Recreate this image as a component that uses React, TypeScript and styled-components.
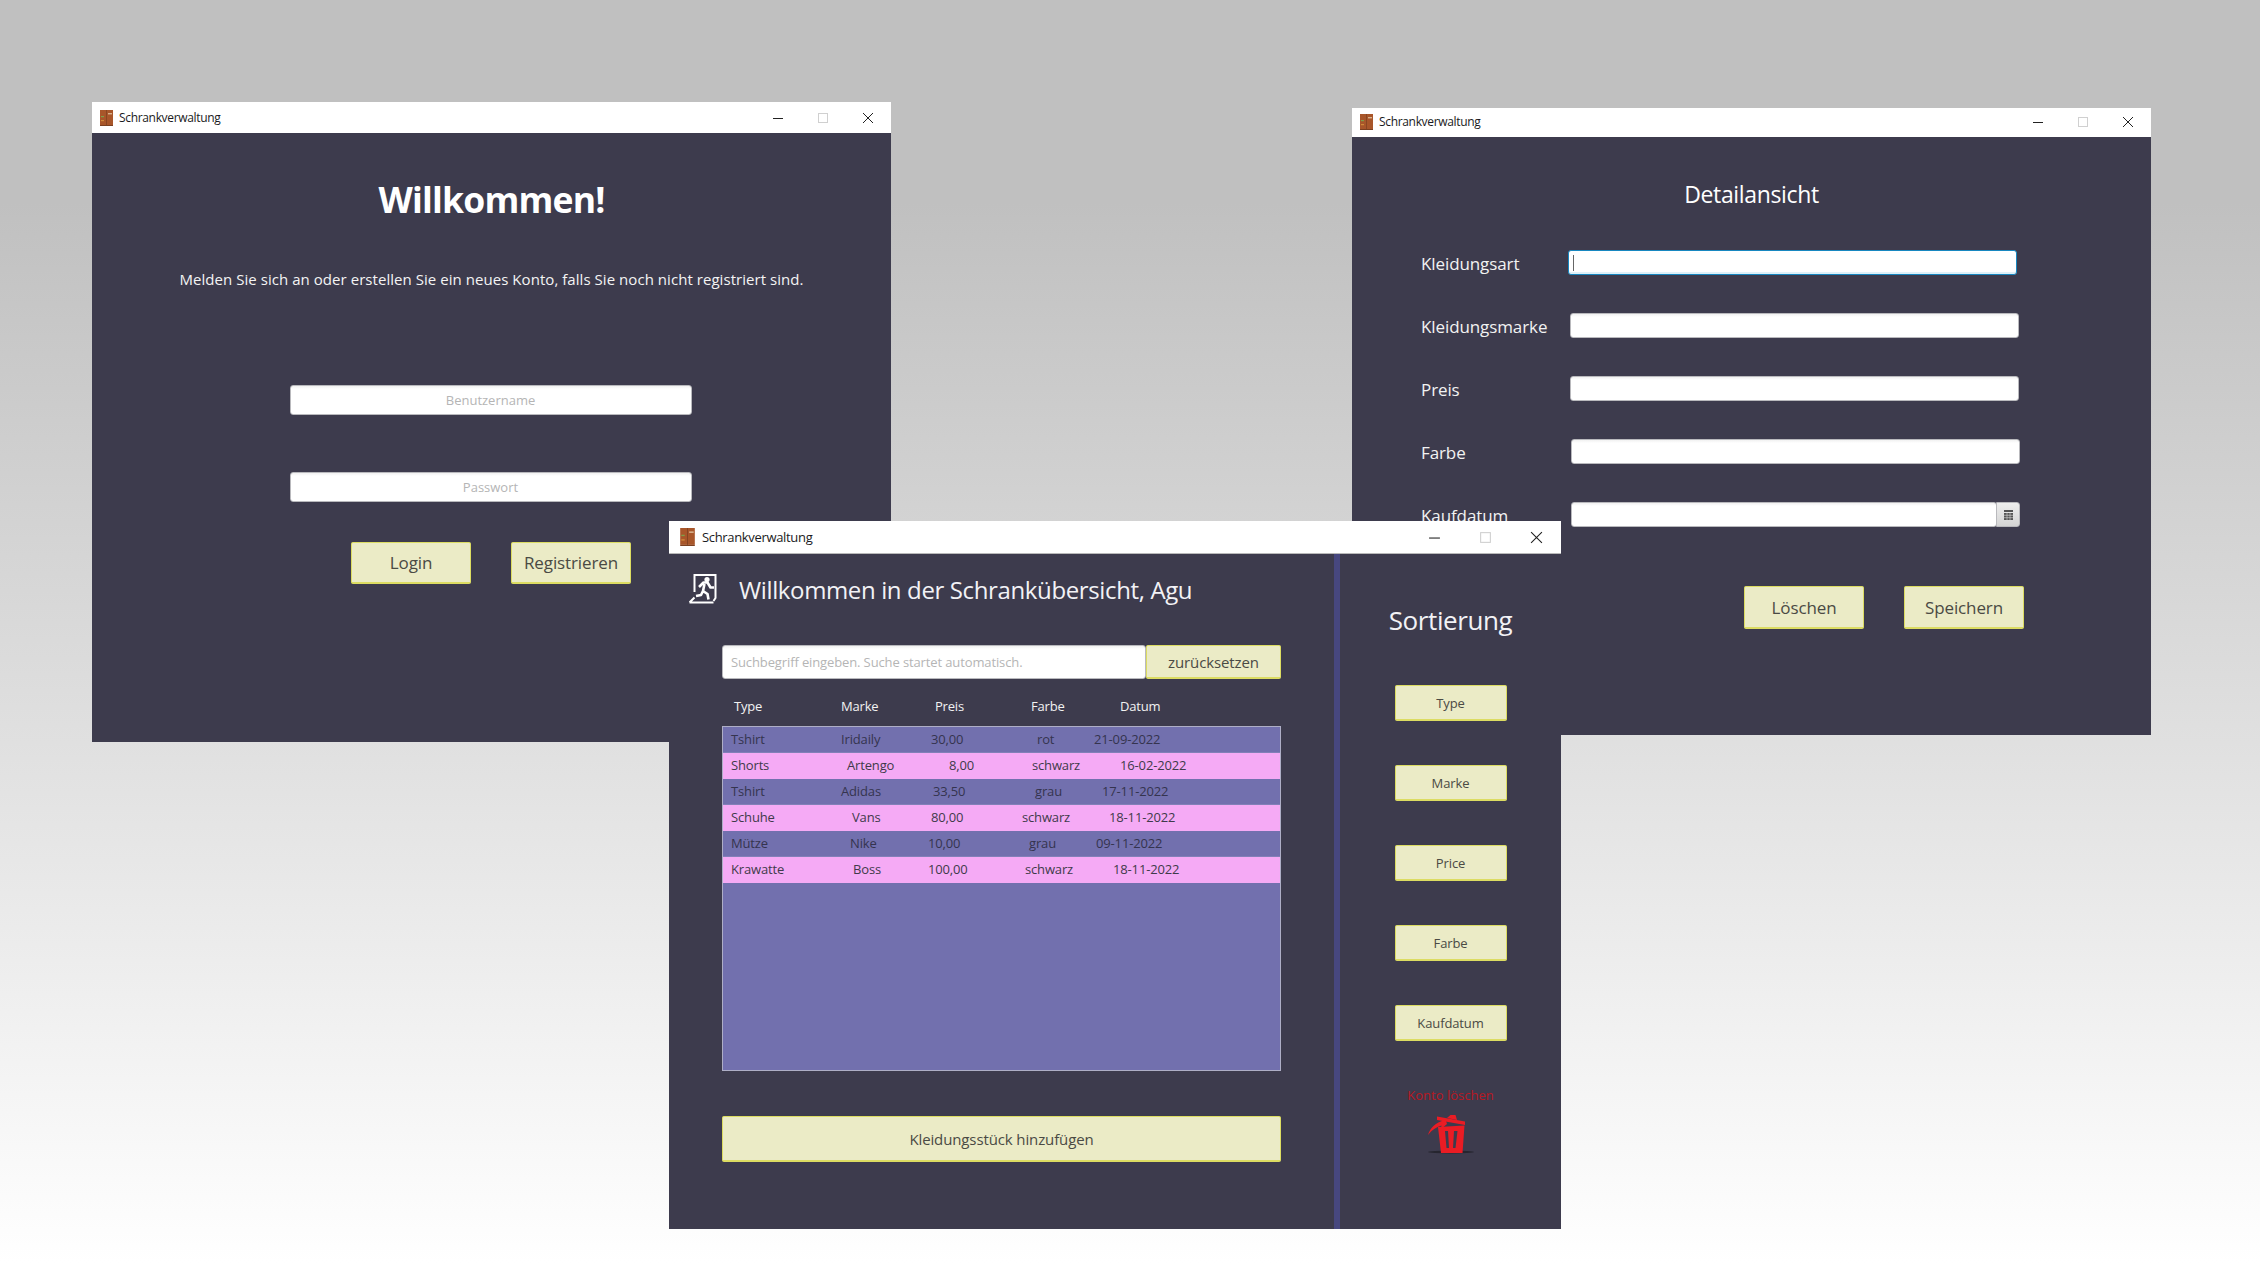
import React from 'react'
import styled, { createGlobalStyle } from 'styled-components'

const GlobalStyle = createGlobalStyle`
  html, body {
    margin: 0;
    padding: 0;
  }
  body {
    font-family: "Open Sans", "Noto Sans", sans-serif;
  }
  * {
    box-sizing: border-box;
  }
`

const Desktop = styled.div`
  position: relative;
  width: 2260px;
  height: 1264px;
  overflow: hidden;
  background: linear-gradient(#c0c0c0 16%, #ffffff 100%);
`

const Window = styled.section<{ $x: number; $y: number; $w: number; $h: number }>`
  position: absolute;
  left: ${p => p.$x}px;
  top: ${p => p.$y}px;
  width: ${p => p.$w}px;
  height: ${p => p.$h}px;
  display: flex;
  flex-direction: column;
  background: #3d3b4d;
`

const TitleBar = styled.header<{ $h: number; $big?: boolean; $lift?: number }>`
  flex: none;
  height: ${p => p.$h}px;
  display: flex;
  align-items: center;
  background: #ffffff;
  padding-left: ${p => (p.$big ? 11 : 8)}px;
  padding-bottom: ${p => p.$lift ?? 0}px;
  font-size: ${p => (p.$big ? 13 : 12)}px;
  letter-spacing: -0.33px;
  color: #1a1a22;
  border-bottom: ${p => (p.$big ? '1px solid #b9b9b9' : 'none')};
`

const TitleText = styled.span<{ $big?: boolean }>`
  margin-left: ${p => (p.$big ? 7 : 6)}px;
`

const Controls = styled.div<{ $big?: boolean }>`
  margin-left: auto;
  display: flex;
  align-items: center;
  gap: ${p => (p.$big ? 38 : 33)}px;
  padding-right: ${p => (p.$big ? 18 : 17)}px;
`

const FieldInput = styled.input`
  display: block;
  width: 100%;
  height: 100%;
  padding: 0 6px;
  font: inherit;
  font-size: 13px;
  color: #333;
  background: linear-gradient(#f1f1f1 0, #ffffff 3px);
  border: 1px solid #b9b9bd;
  border-radius: 3px;
  outline: none;

  &::placeholder {
    color: #b5b5b5;
    opacity: 1;
  }
`

const YellowButton = styled.button<{ $w: number; $h: number; $size?: number }>`
  flex: none;
  width: ${p => p.$w}px;
  height: ${p => p.$h}px;
  padding: 0;
  font-family: inherit;
  font-size: ${p => p.$size ?? 17}px;
  letter-spacing: -0.12px;
  color: #4a4a44;
  background: #ebebc6;
  border: 1px solid #dcdc62;
  border-bottom-width: 2px;
  border-radius: 2px;
`

/* Login */

const LoginBody = styled.div`
  display: flex;
  flex-direction: column;
  align-items: center;
`

const LoginHeading = styled.h1`
  margin: 41px 0 0;
  height: 50px;
  line-height: 50px;
  font-size: 35.500px;
  font-weight: 700;
  letter-spacing: -0.8px;
  color: #ffffff;
`

const LoginIntro = styled.p`
  margin: 43px 0 0;
  height: 24px;
  line-height: 24px;
  font-size: 15px;
  letter-spacing: 0.05px;
  color: #f4f4f4;
`

const LoginField = styled.div<{ $top: number }>`
  width: 402px;
  height: 30px;
  margin-top: ${p => p.$top}px;
  margin-right: 2px;

  input {
    text-align: center;
  }
`

const LoginButtons = styled.div`
  display: flex;
  gap: 40px;
  margin-top: 40px;
  margin-right: 1px;
`

/* Detail */

const DetailBody = styled.div`
  display: flex;
  flex-direction: column;
`

const DetailHeading = styled.h2`
  margin: 40px 0 0;
  height: 34px;
  line-height: 34px;
  text-align: center;
  font-size: 23px;
  font-weight: 400;
  letter-spacing: -0.35px;
  color: #ffffff;
`

const DetailForm = styled.div`
  display: flex;
  flex-direction: column;
  gap: 38px;
  margin-top: 39px;
  padding-left: 69px;
`

const DetailRow = styled.div`
  display: flex;
  align-items: center;
  height: 25px;
`

const DetailLabel = styled.label`
  flex: none;
  width: 149px;
  padding-top: 1px;
  font-size: 17px;
  letter-spacing: -0.1px;
  color: #f2f2f2;
`

const DetailField = styled.div<{ $shift?: number }>`
  position: relative;
  display: flex;
  width: 449px;
  height: 25px;
  margin-left: ${p => p.$shift ?? 0}px;
`

const FocusedField = styled(FieldInput)`
  border: 1px solid #1787c0;
  box-shadow: inset 0 -2px 0 #dff1f8;
  background: #ffffff;
`

const Caret = styled.span`
  position: absolute;
  left: 5px;
  top: 5px;
  width: 1px;
  height: 16px;
  background: #666;
`

const DateButton = styled.div`
  flex: none;
  width: 24px;
  margin-left: -1px;
  display: flex;
  align-items: center;
  justify-content: center;
  background: linear-gradient(#eeeeee, #d4d4d4);
  border: 1px solid #b9b9bd;
  border-radius: 0 3px 3px 0;
`

const DetailButtons = styled.div`
  display: flex;
  justify-content: flex-end;
  gap: 40px;
  margin-top: 59px;
  padding-right: 127px;
`

/* Overview */

const OverviewBody = styled.div`
  flex: 1;
  display: flex;
  min-height: 0;
`

const OverviewMain = styled.div`
  flex: none;
  width: 665px;
  padding: 20px 53px 0;
  display: flex;
  flex-direction: column;
`

const OverviewHeader = styled.div`
  display: flex;
  align-items: center;
  height: 30px;
  margin-left: -33px;
`

const OverviewHeading = styled.h2`
  margin: 0 0 0 22px;
  font-size: 24px;
  font-weight: 400;
  letter-spacing: -0.37px;
  color: #f2f2f6;
`

const SearchRow = styled.div`
  display: flex;
  height: 34px;
  margin-top: 41px;

  input {
    flex: 1;
    min-width: 0;
    padding: 0 8px;
    font-size: 13px;
    letter-spacing: -0.12px;
  }
`

const ColumnHeader = styled.div`
  display: flex;
  height: 20px;
  line-height: 19px;
  margin-top: 18px;
  padding-left: 12px;
  font-size: 13px;
  letter-spacing: -0.2px;
  color: #f2f2f2;
`

const ClothesTable = styled.div`
  height: 345px;
  margin-top: 9px;
  background: #7270ae;
  border: 1px solid #aeaec6;
`

const ClothesRow = styled.div<{ $pink: boolean }>`
  display: flex;
  height: 26px;
  line-height: 25px;
  padding-left: 8px;
  font-size: 13px;
  letter-spacing: -0.15px;
  color: ${p => (p.$pink ? '#3f3a4a' : '#35344f')};
  background: ${p => (p.$pink ? '#f5aaf5' : '#7270ae')};
  border-bottom: 1px solid ${p => (p.$pink ? '#f5aaf5' : '#8280b8')};
`

const Cell = styled.span<{ $w: number }>`
  flex: none;
  width: ${p => p.$w}px;
  white-space: nowrap;
`

const AddButton = styled(YellowButton)`
  margin-top: 45px;
`

const Divider = styled.div`
  flex: none;
  width: 6px;
  background: #47477f;
`

const SortPanel = styled.aside`
  flex: 1;
  display: flex;
  flex-direction: column;
  align-items: center;
  padding-top: 49px;
`

const SortHeading = styled.h2`
  margin: 0 0 46px;
  height: 36px;
  line-height: 35px;
  font-size: 26px;
  font-weight: 400;
  letter-spacing: -0.4px;
  color: #f2f2f6;
`

const SortButtons = styled.div`
  display: flex;
  flex-direction: column;
  gap: 44px;
`

const DeleteLabel = styled.span`
  margin-top: 45px;
  height: 18px;
  line-height: 18px;
  font-size: 13px;
  color: #b81822;
`

const TrashSlot = styled.div`
  margin-top: 11px;
  line-height: 0;
`

/* Drawings */

const CupboardIcon = ({ big }: { big?: boolean }) => (
  <svg width={big ? 15 : 13} height={big ? 18 : 16} viewBox="0 0 13 16">
    <rect x="0" y="0" width="13" height="15" fill="#a8562a" />
    <rect x="0" y="15" width="13" height="1" fill="#7c4020" />
    <rect x="6.2" y="0" width="0.7" height="15" fill="#7c4020" />
    <rect x="8" y="3" width="4" height="1.4" fill="#d9b28c" />
    <rect x="1" y="6" width="3" height="1.2" fill="#7fa04a" />
    <rect x="1" y="10" width="3" height="1.2" fill="#d08a3a" />
  </svg>
)

const WindowControls = ({ big }: { big?: boolean }) => {
  const size = big ? 13 : 12
  return (
    <Controls $big={big}>
      <svg width={size} height={size} viewBox="0 0 12 12">
        <path d="M1 6.5h10" stroke="#222" strokeWidth="1" />
      </svg>
      <svg width={size} height={size} viewBox="0 0 12 12">
        <rect x="1.5" y="1.5" width="9" height="9" fill="none" stroke="#d0d0d0" />
      </svg>
      <svg width={size} height={size} viewBox="0 0 12 12">
        <path d="M1 1l10 10M11 1L1 11" stroke="#222" strokeWidth="1" />
      </svg>
    </Controls>
  )
}

const AppTitleBar = ({ height, big, lift }: { height: number; big?: boolean; lift?: number }) => (
  <TitleBar $h={height} $big={big} $lift={lift}>
    <CupboardIcon big={big} />
    <TitleText $big={big}>Schrankverwaltung</TitleText>
    <WindowControls big={big} />
  </TitleBar>
)

const ExitIcon = () => (
  <svg width="28" height="30" viewBox="0 0 28 30" fill="none">
    <path d="M5.500 18V1h21v23l-2 3" stroke="#fff" strokeWidth="2" />
    <path d="M0.500 28.500h24M0.500 28.500l5-5" stroke="#fff" strokeWidth="2" />
    <circle cx="18" cy="5.500" r="2.600" fill="#fff" />
    <path
      d="M10 13l4.500-4.500h4l3 5h3.500M15.500 10l-1.500 7 4.500 3 1 5.500M14 17l-2 4-5 1"
      stroke="#fff"
      strokeWidth="2.600"
      strokeLinejoin="round"
    />
  </svg>
)

const TrashIcon = () => (
  <svg width="48" height="40" viewBox="0 0 48 40">
    <ellipse cx="24" cy="37" rx="23" ry="1.500" fill="#26252f" />
    <path d="M10 1.500L38 6.500V10L10 5Z" fill="#ea1c24" />
    <path d="M20 3L23.500 0H28.500L30 5Z" fill="#ea1c24" />
    <path d="M1 20C3 13 9 7 17 5.500L18.500 4L20 9L14 14L14.500 10.500C9 12 5 15 1 20Z" fill="#ea1c24" />
    <path
      d="M11 12L37.500 10.500L35.500 38H14ZM18 16L19.500 33H22L21 16ZM27 16L26 33H28.500L30.500 16Z"
      fill="#ea1c24"
      fillRule="evenodd"
    />
  </svg>
)

const CalendarGlyph = () => (
  <svg width="9" height="10" viewBox="0 0 9 10">
    <rect width="9" height="2" fill="#555" />
    <path d="M0 3h9v7H0z" fill="#555" />
    <path d="M3 3v7M6 3v7M0 5.300h9M0 7.700h9" stroke="#d8d8d8" strokeWidth="0.6" />
  </svg>
)

/* Data: every row starts its texts at its own place, as in the app */

const columnHeads = [
  { text: 'Type', w: 107 },
  { text: 'Marke', w: 94 },
  { text: 'Preis', w: 96 },
  { text: 'Farbe', w: 89 },
  { text: 'Datum', w: 60 }
]

const clothes = [
  { texts: ['Tshirt', 'Iridaily', '30,00', 'rot', '21-09-2022'], at: [731, 841, 931, 1037, 1094] },
  { texts: ['Shorts', 'Artengo', '8,00', 'schwarz', '16-02-2022'], at: [731, 847, 949, 1032, 1120] },
  { texts: ['Tshirt', 'Adidas', '33,50', 'grau', '17-11-2022'], at: [731, 841, 933, 1035, 1102] },
  { texts: ['Schuhe', 'Vans', '80,00', 'schwarz', '18-11-2022'], at: [731, 852, 931, 1022, 1109] },
  { texts: ['Mütze', 'Nike', '10,00', 'grau', '09-11-2022'], at: [731, 850, 928, 1029, 1096] },
  { texts: ['Krawatte', 'Boss', '100,00', 'schwarz', '18-11-2022'], at: [731, 853, 928, 1025, 1113] }
]

const sortKeys = ['Type', 'Marke', 'Price', 'Farbe', 'Kaufdatum']

const LoginWindow = () => (
  <Window $x={92} $y={102} $w={799} $h={640}>
    <AppTitleBar height={31} />
    <LoginBody>
      <LoginHeading>Willkommen!</LoginHeading>
      <LoginIntro>Melden Sie sich an oder erstellen Sie ein neues Konto, falls Sie noch nicht registriert sind.</LoginIntro>
      <LoginField $top={94}>
        <FieldInput placeholder="Benutzername" />
      </LoginField>
      <LoginField $top={57}>
        <FieldInput placeholder="Passwort" />
      </LoginField>
      <LoginButtons>
        <YellowButton $w={120} $h={42}>Login</YellowButton>
        <YellowButton $w={120} $h={42}>Registrieren</YellowButton>
      </LoginButtons>
    </LoginBody>
  </Window>
)

const DetailWindow = () => (
  <Window $x={1352} $y={108} $w={799} $h={627}>
    <AppTitleBar height={29} lift={2} />
    <DetailBody>
      <DetailHeading>Detailansicht</DetailHeading>
      <DetailForm>
        <DetailRow>
          <DetailLabel>Kleidungsart</DetailLabel>
          <DetailField $shift={-2}>
            <FocusedField />
            <Caret />
          </DetailField>
        </DetailRow>
        <DetailRow>
          <DetailLabel>Kleidungsmarke</DetailLabel>
          <DetailField>
            <FieldInput />
          </DetailField>
        </DetailRow>
        <DetailRow>
          <DetailLabel>Preis</DetailLabel>
          <DetailField>
            <FieldInput />
          </DetailField>
        </DetailRow>
        <DetailRow>
          <DetailLabel>Farbe</DetailLabel>
          <DetailField $shift={1}>
            <FieldInput />
          </DetailField>
        </DetailRow>
        <DetailRow>
          <DetailLabel>Kaufdatum</DetailLabel>
          <DetailField $shift={1}>
            <FieldInput />
            <DateButton>
              <CalendarGlyph />
            </DateButton>
          </DetailField>
        </DetailRow>
      </DetailForm>
      <DetailButtons>
        <YellowButton $w={120} $h={43}>Löschen</YellowButton>
        <YellowButton $w={120} $h={43}>Speichern</YellowButton>
      </DetailButtons>
    </DetailBody>
  </Window>
)

const OverviewWindow = () => (
  <Window $x={669} $y={521} $w={892} $h={708}>
    <AppTitleBar height={33} big />
    <OverviewBody>
      <OverviewMain>
        <OverviewHeader>
          <ExitIcon />
          <OverviewHeading>Willkommen in der Schrankübersicht, Agu</OverviewHeading>
        </OverviewHeader>
        <SearchRow>
          <FieldInput placeholder="Suchbegriff eingeben. Suche startet automatisch." />
          <YellowButton $w={135} $h={34} $size={15}>zurücksetzen</YellowButton>
        </SearchRow>
        <ColumnHeader>
          {columnHeads.map(head => (
            <Cell key={head.text} $w={head.w}>{head.text}</Cell>
          ))}
        </ColumnHeader>
        <ClothesTable>
          {clothes.map((item, index) => (
            <ClothesRow key={index} $pink={index % 2 === 1}>
              {item.texts.map((text, i) => (
                <Cell key={i} $w={i < 4 ? item.at[i + 1] - item.at[i] : 80}>{text}</Cell>
              ))}
            </ClothesRow>
          ))}
        </ClothesTable>
        <AddButton $w={559} $h={46} $size={15}>Kleidungsstück hinzufügen</AddButton>
      </OverviewMain>
      <Divider />
      <SortPanel>
        <SortHeading>Sortierung</SortHeading>
        <SortButtons>
          {sortKeys.map(key => (
            <YellowButton key={key} $w={112} $h={36} $size={13}>{key}</YellowButton>
          ))}
        </SortButtons>
        <DeleteLabel>Konto löschen</DeleteLabel>
        <TrashSlot>
          <TrashIcon />
        </TrashSlot>
      </SortPanel>
    </OverviewBody>
  </Window>
)

export default function App() {
  return (
    <>
      <GlobalStyle />
      <Desktop>
        <LoginWindow />
        <DetailWindow />
        <OverviewWindow />
      </Desktop>
    </>
  )
}
